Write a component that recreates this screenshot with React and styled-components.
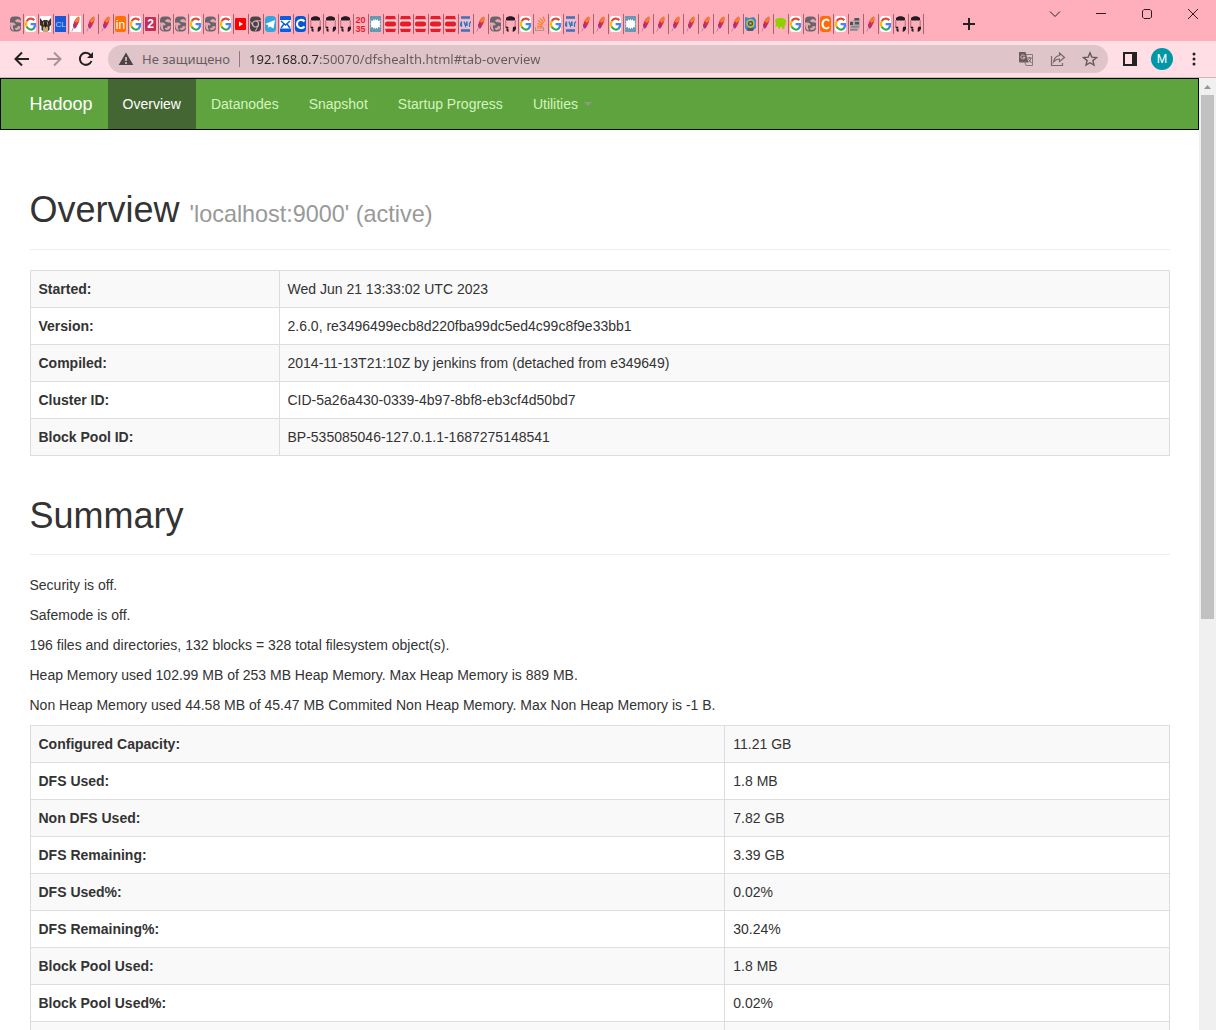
import React from "react";
import styled, { createGlobalStyle } from "styled-components";

const GlobalStyle = createGlobalStyle`
  *, *::before, *::after { box-sizing: border-box; }
  html, body { margin: 0; padding: 0; }
  body {
    background: #fff;
    color: #333;
    font-family: "Liberation Sans", Arial, Helvetica, sans-serif;
    font-size: 14px;
    line-height: 20px;
    overflow: hidden;
  }
`;

/* ---------- Browser window ---------- */

const Window = styled.div`
  display: flex;
  flex-direction: column;
  height: 100vh;
`;

const TabStrip = styled.div`
  display: flex;
  flex: none;
  height: 41px;
  background: #ffaebc;
`;

const Tabs = styled.div`
  display: flex;
  align-items: center;
  padding: 7px 0 0 9px;
`;

const Tab = styled.button`
  display: flex;
  align-items: center;
  width: 15px;
  height: 20px;
  padding: 0 0 0 1px;
  border: 0;
  border-right: 1px solid #a5626f;
  background: none;

  svg { display: block; flex: none; }
`;

const PlainButton = styled.button`
  display: flex;
  align-items: center;
  justify-content: center;
  width: ${(p) => p.$width || 32}px;
  height: 28px;
  padding: 0;
  border: 0;
  background: none;
  color: ${(p) => p.$color || "#222"};

  svg { display: block; }
`;

const NewTab = styled(PlainButton)`
  align-self: center;
  margin: 7px 0 0 29px;
`;

const WindowControls = styled.div`
  display: flex;
  margin-left: auto;
`;

const Toolbar = styled.div`
  display: flex;
  flex: none;
  align-items: center;
  height: 37px;
  padding: 0 6px;
  background: #ffdee5;
  border-bottom: 1px solid #ceb4ba;
`;

const Omnibox = styled.form`
  display: flex;
  flex: 1;
  align-items: center;
  height: 28px;
  margin: 0 6px;
  padding: 0 2px 0 10px;
  border-radius: 14px;
  background: #dfc4ca;
  font-family: "Noto Sans", "Open Sans", sans-serif;
  font-size: 13px;
`;

const SiteStatus = styled.button`
  display: flex;
  flex: none;
  align-items: center;
  gap: 8px;
  height: 16px;
  padding: 0 9px 0 0;
  border: 0;
  border-right: 1px solid #8c7c80;
  background: none;
  color: #6a5d60;
  font: inherit;
`;

const Address = styled.input`
  flex: 1;
  min-width: 0;
  height: 24px;
  margin-left: 9px;
  padding: 0;
  border: 0;
  outline: 0;
  background: linear-gradient(90deg, #2a2426 70px, #66585c 70px);
  background-clip: text;
  color: transparent;
  font: inherit;
`;

const Avatar = styled.span`
  width: 22px;
  height: 22px;
  border-radius: 50%;
  background: #0097a7;
  color: #fff;
  font-family: Roboto, sans-serif;
  font-size: 12px;
  line-height: 22px;
  text-align: center;
`;

const Viewport = styled.div`
  display: flex;
  flex: 1;
  min-height: 0;
`;

const Page = styled.div`
  flex: 1;
  min-width: 0;
  overflow: hidden;
`;

const ScrollTrack = styled.div`
  display: flex;
  flex: none;
  flex-direction: column;
  align-items: center;
  width: 17px;
  background: #f0f0f0;
`;

const ScrollThumb = styled.div`
  width: 13px;
  height: 55%;
  background: #c1c1c1;
`;

/* ---------- Page content ---------- */

const Container = styled.div`
  max-width: 1170px;
  margin: 0 auto;
  padding: 0 15px;
`;

const Navbar = styled.header`
  border: 1px solid #080808;
  background: #5fa33e;
`;

const NavRow = styled.nav`
  display: flex;
`;

const Brand = styled.a`
  margin-left: -15px;
  padding: 15px;
  color: #fff;
  font-size: 18px;
  line-height: 20px;
  text-decoration: none;
`;

const NavList = styled.ul`
  display: flex;
  margin: 0;
  padding: 0;
  list-style: none;
`;

const NavLink = styled.a`
  display: flex;
  align-items: center;
  gap: 6px;
  padding: 15px;
  background: ${(p) => (p.$active ? "#446633" : "transparent")};
  color: ${(p) => (p.$active ? "#fff" : "#d2f5bd")};
  text-decoration: none;
`;

const Caret = styled.span`
  border: 4px solid transparent;
  border-top-color: #8c9c84;
  border-bottom: 0;
`;

const PageHeader = styled.div`
  margin: ${(p) => (p.$first ? "60px" : "40px")} 0 20px;
  padding-bottom: ${(p) => (p.$first ? "19px" : "18px")};
  border-bottom: 1px solid #eee;
`;

const Title = styled.h1`
  margin: 0;
  font-size: 36px;
  font-weight: 400;
  line-height: 40px;
`;

const Small = styled.small`
  color: #999;
  font-size: 65%;
  line-height: 1;
`;

const Text = styled.p`
  margin: 0 0 10px;
`;

const Table = styled.table`
  width: 100%;
  border-collapse: collapse;
  table-layout: fixed;

  tr:nth-child(odd) { background: #f9f9f9; }

  th, td {
    height: 37px;
    padding: 8px;
    border: 1px solid #ddd;
    text-align: left;
  }

  th { width: ${(p) => p.$labelWidth}; }
`;

/* ---------- Favicons, drawn in a narrow 11x16 slot ---------- */

const IconText = styled.text`
  font-family: "Liberation Sans", Arial, sans-serif;
  font-size: ${(p) => p.$size}px;
  font-weight: ${(p) => p.$weight || 700};
  text-anchor: middle;
`;

const Feather = () => (
  <>
    <path d="M3 11.500C3 8 4.200 4.500 6.500 2L9 .5c1 2 .3 5.500-1.500 8.500L5 12.500z" fill="#d42a55" />
    <path d="M4.800 5C5.500 3 7 1.200 9 .5c.7 1.500.5 3-.1 4.800L6.500 7z" fill="#f37f26" />
    <path d="M3 11.500c0-1.500.2-2.500.6-3.700l3.200 2.700L5 12.500z" fill="#a52f7a" />
    <path d="M1.800 15.500C2.500 13.500 3.200 12 4 10.500" stroke="#b987b5" fill="none" />
  </>
);

const GitHub = () => (
  <>
    <path d="M1 2C3 -.2 8 -.2 10 2v2c-1 .8-2.500.5-4.500.5S2 4.800 1 4z" fill="#221c22" />
    <path d="M.8 4v6M10.200 4v6" stroke="#b56c7a" />
    <path d="M0 10.500l3 .3.500 1.200-1.800.5-1.200-1zM1.500 12.500l2 .3V16L1.500 15zM11 10.500l-2.800.3-.5 2V16l2-1 1.300-2z" fill="#221c22" />
  </>
);

const ICONS = {
  globe: (
    <>
      <rect y=".5" width="11" height="15" rx="4" fill="#66666a" />
      <path d="M0 6.500h3.500l2 1.500v1.200H3V12l1 2.500-1.500-.3C.8 12.800 0 10.500 0 6.500z" fill="#ffaebc" opacity=".85" />
      <path d="M7.500 3L5 4.500 6 6l5 .8V5L9.500 3.500zM11 10.500L7.500 10v1.500l-3 .8L6 14l3-.5z" fill="#ffaebc" opacity=".85" />
    </>
  ),
  google: (
    <>
      <rect width="11" height="16" rx="3" fill="#fff" />
      <g fill="none" strokeWidth="2.200">
        <path d="M9.300 4.200C7 1.800 3.200 2.300 1.700 5.200" stroke="#ea4335" />
        <path d="M1.800 5c-1 1.700-1 4.300 0 6" stroke="#fbbc05" />
        <path d="M1.700 10.800c1.600 3 5.200 3.600 7.300 1.500" stroke="#34a853" />
        <path d="M5.600 8.200h4.500c0 1.600-.4 3.200-1.500 4.300" stroke="#4285f4" />
      </g>
    </>
  ),
  dog: (
    <>
      <path d="M0 0h11v16H0z" fill="#fff" />
      <path d="M0 2l2.500 3L4 4h3l1.500 1L11 2v7l-1.500 1.500V14L8 15H3l-1.500-1v-3.500L0 9z" fill="#3a2f2b" />
      <path d="M3 5l1 2-1 3zM8 5L7 7l1 3zM3 11l2.500-1L8 11v5H3z" fill="#c6a577" />
      <path d="M4.500 7h2v3l-1 2-1-2z" fill="#211b1b" />
    </>
  ),
  cl: (
    <>
      <path d="M0 0h11v16H0z" fill="#1759d8" />
      <IconText x="5.500" y="11" $size="8" $weight="400" fill="#b9d1ff">CL</IconText>
    </>
  ),
  featherWhite: (
    <>
      <path d="M0 0h11v16H0z" fill="#fff" />
      <Feather />
    </>
  ),
  feather: <Feather />,
  orangeIn: (
    <>
      <rect width="11" height="16" rx="2" fill="#ff7200" />
      <IconText x="5.500" y="13" $size="12" $weight="400" fill="#fff">in</IconText>
    </>
  ),
  two: (
    <>
      <rect y="1" width="11" height="14" rx="1" fill="#c52d5b" />
      <IconText x="5.500" y="12" $size="12" fill="#fff">2</IconText>
    </>
  ),
  youtube: (
    <>
      <rect y="2" width="11" height="12" rx="1" fill="#f00" />
      <path d="M4 5.500v5L8 8z" fill="#fff" />
    </>
  ),
  chrome: (
    <>
      <rect y=".5" width="11" height="15" rx="4" fill="#49434a" />
      <circle cx="5.500" cy="8" r="3" fill="#49434a" stroke="#ddb0bb" strokeWidth="1.200" />
      <path d="M5.500 4.800H11M3 9.800L.5 5.500M8 10l-2.500 5" stroke="#ddb0bb" />
    </>
  ),
  telegram: (
    <>
      <rect width="11" height="16" rx="3.500" fill="#35a6dc" />
      <path d="M0 8l10-4-1.500 8.500L5 10.500l-1.500 1.500-.5-3z" fill="#fff" />
    </>
  ),
  mail: (
    <>
      <rect width="11" height="16" rx="1" fill="#0d5ce8" />
      <path d="M0 4h11v8.500H0z" fill="#fff" />
      <path d="M1 5l4.500 4L10 5M1 12l3-4M10 12L7 8" fill="none" stroke="#0d5ce8" strokeWidth="1.500" />
    </>
  ),
  blueC: (
    <>
      <rect width="11" height="16" rx="3.500" fill="#0757d4" />
      <path d="M9.500 5.500C7 2.500 2 4 2 8s5 5.500 7.500 2.500" fill="none" stroke="#fff" strokeWidth="2" />
    </>
  ),
  github: <GitHub />,
  digits: (
    <g fill="#e31d2d">
      <IconText x="5.500" y="7" $size="9">20</IconText>
      <IconText x="5.500" y="15.500" $size="9">35</IconText>
    </g>
  ),
  burst: (
    <>
      <path d="M0 0h11v16H0z" fill="#6799b5" />
      <path d="M5.500 3l1 1.500L8 3v2l2.500-.5L9.500 7l1.500 1-1.500 1 1 2.500L8 11v2l-1.500-1.500-1 1.500-1-1.500L3 13v-2l-2.500.5L1.500 9 0 8l1.500-1-1-2.500L3 5V3l1.500 1.500z" fill="#fff" />
    </>
  ),
  red: (
    <>
      <path d="M1 0h9l1 3.500H0zM0 12.500h11L10 16H1z" fill="#e51d2b" />
      <path d="M0 3.500h11v9H0z" fill="#ffd0d5" />
      <rect y="5.500" width="11" height="5" rx="2" fill="#e51d2b" />
    </>
  ),
  api: (
    <>
      <path d="M1 1.500h9M1 14.500h9" stroke="#3972bd" strokeWidth="2.500" />
      <path d="M0 4h11v8H0z" fill="#e9c3d0" />
      <path d="M0 10l1.500-4.500V11M4 5.500L5.500 10 7 5.500V10M11 5.500L9.500 7.500V11" fill="none" stroke="#3972bd" strokeWidth="1.300" />
    </>
  ),
  stack: (
    <>
      <path d="M.5 11v3.500h8V11" fill="none" stroke="#b39398" strokeWidth="1.200" />
      <path d="M2 12h5.500M2 10l5.500.6M2.500 7.500l5.200 1.800M3 4.500L8 8M5 2l4 5M8 .5l2 5" stroke="#f48024" strokeWidth="1.200" />
    </>
  ),
  badge: (
    <>
      <path d="M0 1l4 1 5-1 2 3v8l-4 3H2l-2-3z" fill="#398dc7" />
      <circle cx="5.500" cy="7.500" r="3.500" fill="#345d70" stroke="#e3bc37" strokeWidth="1.400" />
      <path d="M4.500 6.500h2v2h-2z" fill="#e3bc37" />
      <path d="M2 12h7l-1 3H3z" fill="#4c5c62" />
    </>
  ),
  green: <path d="M0 4l2.500-2H8l3 2-.5 5-1 1v3H7.500l-.5-2-1.500-.5-.5 2H3.500L3 10.500H0L1 8z" fill="#91cf00" />,
  orangeC: (
    <>
      <rect width="11" height="16" rx="3" fill="#ff6b08" />
      <path d="M9 5C7 2.500 2.500 3.500 2.500 8S7 13.500 9 11" fill="none" stroke="#fff" strokeWidth="2" />
    </>
  ),
  building: (
    <>
      <path d="M0 5l4-1V2h6v8l-2 5H0z" fill="#b3a5ab" />
      <path d="M4.500 2H9v2.500H4.500zM0 6h3v3H0zM5 6h4v2.500H5z" fill="#565055" />
      <path d="M1 10h8v1.500H1zM0 13h7v1.500H0z" fill="#8c8388" />
    </>
  ),
};

const repeat = (name, count) => Array(count).fill(name);

const TABS = [
  "globe", "google", "dog", "cl", "featherWhite", "feather", "feather", "orangeIn",
  "google", "two", "globe", "globe", "google", "globe", "google", "youtube", "chrome",
  "telegram", "mail", "blueC", ...repeat("github", 3), "digits", "burst",
  ...repeat("red", 5), "api", "feather", "globe", "github", "google", "stack", "google",
  "api", "feather", "feather", "google", "burst", ...repeat("feather", 7), "badge",
  "feather", "green", "google", "globe", "orangeC", "google", "building", "feather",
  "google", "github", "github",
];

/* ---------- Toolbar icons ---------- */

const Line = ({ size = 16, width = 1, d }) => (
  <svg width={size} height={size} viewBox={`0 0 ${size} ${size}`} fill="none" stroke="currentColor" strokeWidth={width} aria-hidden="true">
    <path d={d} />
  </svg>
);

const ReloadIcon = () => (
  <svg width="16" height="16" viewBox="0 0 16 16" aria-hidden="true">
    <path d="M13.500 10A6 6 0 1 1 12.500 4L14 5.500" fill="none" stroke="currentColor" strokeWidth="2" />
    <path d="M15 1v6H9z" fill="currentColor" />
  </svg>
);

const WarningIcon = () => (
  <svg width="16" height="16" viewBox="0 0 16 16" aria-hidden="true">
    <path d="M8 1.500L15.300 14H.7z" fill="#4b4346" />
    <path d="M8 6v4M8 11v2" stroke="#dfc4ca" strokeWidth="1.600" />
  </svg>
);

const TranslateIcon = () => (
  <svg width="16" height="16" viewBox="0 0 16 16" fill="none" aria-hidden="true">
    <path d="M7 3.500h7.500v11H8l-1-3" stroke="#8a7a7e" />
    <path d="M1 1h6.500l3 10.500H2q-1 0-1-1z" fill="#6b5d61" />
    <path d="M6.500 4.500C4 3 2.500 5 3 6.500s3.500 2 4-.2H5" stroke="#dfc4ca" />
    <path d="M9.500 7h4M11.500 6v1M13 7c-.5 2-1.500 3-2.500 4M10.500 8.500l3 3.500" stroke="#6b5d61" />
  </svg>
);

const ShareIcon = () => (
  <svg width="16" height="16" viewBox="0 0 16 16" fill="none" stroke="currentColor" strokeWidth="1.200" aria-hidden="true">
    <path d="M1.500 5v9.500h11V12" />
    <path d="M9.500 2l5 4.500-5 4V8C7 8 5 9 3.500 11c.5-4 3-6 6-6.500z" />
  </svg>
);

const PanelIcon = () => (
  <svg width="14" height="14" viewBox="0 0 14 14" aria-hidden="true">
    <path d="M0 0h14v14H0z" fill="#222" />
    <path d="M2 2h7v10H2z" fill="#ffdee5" />
  </svg>
);

const DotsIcon = () => (
  <svg width="4" height="14" viewBox="0 0 4 14" fill="currentColor" aria-hidden="true">
    <circle cx="2" cy="2" r="1.500" />
    <circle cx="2" cy="7" r="1.500" />
    <circle cx="2" cy="12" r="1.500" />
  </svg>
);

const ScrollArrow = () => (
  <svg width="17" height="17" viewBox="0 0 17 17" aria-hidden="true">
    <path d="M5 11l3.500-4L12 11z" fill="#969696" />
  </svg>
);

/* ---------- Data ---------- */

const NAV = ["Overview", "Datanodes", "Snapshot", "Startup Progress", "Utilities"];

const OVERVIEW = [
  ["Started:", "Wed Jun 21 13:33:02 UTC 2023"],
  ["Version:", "2.6.0, re3496499ecb8d220fba99dc5ed4c99c8f9e33bb1"],
  ["Compiled:", "2014-11-13T21:10Z by jenkins from (detached from e349649)"],
  ["Cluster ID:", "CID-5a26a430-0339-4b97-8bf8-eb3cf4d50bd7"],
  ["Block Pool ID:", "BP-535085046-127.0.1.1-1687275148541"],
];

const NOTES = [
  "Security is off.",
  "Safemode is off.",
  "196 files and directories, 132 blocks = 328 total filesystem object(s).",
  "Heap Memory used 102.99 MB of 253 MB Heap Memory. Max Heap Memory is 889 MB.",
  "Non Heap Memory used 44.58 MB of 45.47 MB Commited Non Heap Memory. Max Non Heap Memory is -1 B.",
];

const SUMMARY = [
  ["Configured Capacity:", "11.21 GB"],
  ["DFS Used:", "1.8 MB"],
  ["Non DFS Used:", "7.82 GB"],
  ["DFS Remaining:", "3.39 GB"],
  ["DFS Used%:", "0.02%"],
  ["DFS Remaining%:", "30.24%"],
  ["Block Pool Used:", "1.8 MB"],
  ["Block Pool Used%:", "0.02%"],
  ["", ""],
];

const DataTable = ({ rows, labelWidth }) => (
  <Table $labelWidth={labelWidth}>
    <tbody>
      {rows.map(([label, value]) => (
        <tr key={label}>
          <th scope="row">{label}</th>
          <td>{value}</td>
        </tr>
      ))}
    </tbody>
  </Table>
);

export default function App() {
  return (
    <Window>
      <GlobalStyle />
      <TabStrip>
        <Tabs>
          {TABS.map((name, i) => (
            <Tab key={i} type="button" aria-label={name}>
              <svg width="11" height="16" viewBox="0 0 11 16" aria-hidden="true">{ICONS[name]}</svg>
            </Tab>
          ))}
        </Tabs>
        <NewTab type="button" aria-label="New tab"><Line size={12} width={2} d="M6 0v12M0 6h12" /></NewTab>
        <WindowControls>
          <PlainButton $width={46} type="button" aria-label="Search tabs"><Line size={12} d="M1 3.500l5 5 5-5" /></PlainButton>
          <PlainButton $width={46} type="button" aria-label="Minimize"><Line size={10} d="M0 4.500h10" /></PlainButton>
          <PlainButton $width={46} type="button" aria-label="Maximize"><Line size={10} d="M2 .5h6l1.500 1.500v6L8 9.500H2L.5 8V2z" /></PlainButton>
          <PlainButton $width={46} type="button" aria-label="Close"><Line size={10} d="M0 0l10 10M10 0L0 10" /></PlainButton>
        </WindowControls>
      </TabStrip>

      <Toolbar>
        <PlainButton type="button" aria-label="Back"><Line width={2} d="M15 8H2M8 1.500L1.500 8 8 14.500" /></PlainButton>
        <PlainButton type="button" aria-label="Forward" $color="#a89297"><Line width={2} d="M1 8h13M8 1.500L14.500 8 8 14.500" /></PlainButton>
        <PlainButton type="button" aria-label="Reload"><ReloadIcon /></PlainButton>
        <Omnibox>
          <SiteStatus type="button"><WarningIcon />Не защищено</SiteStatus>
          <Address aria-label="Address" defaultValue="192.168.0.7:50070/dfshealth.html#tab-overview" />
          <PlainButton type="button" aria-label="Translate"><TranslateIcon /></PlainButton>
          <PlainButton type="button" aria-label="Share" $color="#77686c"><ShareIcon /></PlainButton>
          <PlainButton type="button" aria-label="Bookmark" $color="#66585c">
            <Line width={1.4} d="M8 1.800l1.800 4.300 4.700.4-3.600 3.100 1.100 4.500L8 11.700l-4 2.400 1.100-4.500L1.500 6.500l4.700-.4z" />
          </PlainButton>
        </Omnibox>
        <PlainButton type="button" aria-label="Side panel"><PanelIcon /></PlainButton>
        <PlainButton type="button" aria-label="Profile"><Avatar>M</Avatar></PlainButton>
        <PlainButton type="button" aria-label="Menu"><DotsIcon /></PlainButton>
      </Toolbar>

      <Viewport>
        <Page>
          <Navbar>
            <Container>
              <NavRow>
                <Brand href="#hadoop">Hadoop</Brand>
                <NavList>
                  {NAV.map((item, i) => (
                    <li key={item}>
                      <NavLink href={`#tab-${i}`} $active={i === 0}>
                        {item}
                        {item === "Utilities" && <Caret />}
                      </NavLink>
                    </li>
                  ))}
                </NavList>
              </NavRow>
            </Container>
          </Navbar>

          <Container as="main">
            <PageHeader $first>
              <Title>Overview <Small>'localhost:9000' (active)</Small></Title>
            </PageHeader>
            <DataTable rows={OVERVIEW} labelWidth="249px" />

            <PageHeader>
              <Title>Summary</Title>
            </PageHeader>
            {NOTES.map((note) => <Text key={note}>{note}</Text>)}
            <DataTable rows={SUMMARY} labelWidth="61%" />
          </Container>
        </Page>
        <ScrollTrack aria-hidden="true">
          <ScrollArrow />
          <ScrollThumb />
        </ScrollTrack>
      </Viewport>
    </Window>
  );
}
